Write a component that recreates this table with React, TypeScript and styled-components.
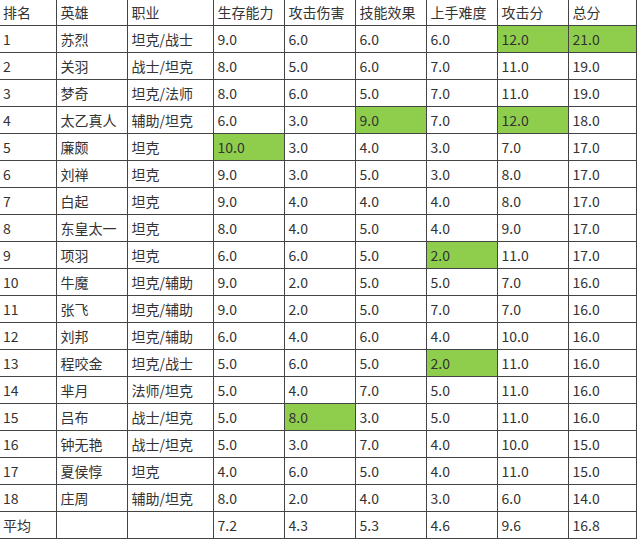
import styled, { createGlobalStyle } from "styled-components";

const GlobalStyle = createGlobalStyle`
    html, body {
        margin: 0;
        padding: 0;
        background: #ffffff;
    }
`;

const Sheet = styled.table`
    width: 636px;
    table-layout: fixed;
    border-collapse: collapse;
    font-family: "Noto Sans CJK SC", "Microsoft YaHei", sans-serif;
    font-size: 14px;
    color: #333333;
`;

const HeadRow = styled.tr`
    height: 25px;
`;

const BodyRow = styled.tr`
    height: 27px;
`;

const Cell = styled.td<{ $hl?: boolean }>`
    padding: 0 0 0 4px;
    border: 1px solid #444444;
    background: ${(p) => (p.$hl ? "#8fce4c" : "#ffffff")};
    white-space: nowrap;
    overflow: hidden;
    line-height: 1;
    vertical-align: middle;

    &:first-child {
        border-left: none;
        padding-left: 3px;
    }
`;

const HeadCell = styled(Cell).attrs({ as: "th" })`
    font-weight: normal;
    text-align: left;
    border-top: none;
`;

const widths = [56, 71, 86, 71, 71, 71, 71, 71, 68];

const headers = ["排名", "英雄", "职业", "生存能力", "攻击伤害", "技能效果", "上手难度", "攻击分", "总分"];

type Row = { cells: string[]; hl?: number[] };

const rows: Row[] = [
    { cells: ["1", "苏烈", "坦克/战士", "9.0", "6.0", "6.0", "6.0", "12.0", "21.0"], hl: [7, 8] },
    { cells: ["2", "关羽", "战士/坦克", "8.0", "5.0", "6.0", "7.0", "11.0", "19.0"] },
    { cells: ["3", "梦奇", "坦克/法师", "8.0", "6.0", "5.0", "7.0", "11.0", "19.0"] },
    { cells: ["4", "太乙真人", "辅助/坦克", "6.0", "3.0", "9.0", "7.0", "12.0", "18.0"], hl: [5, 7] },
    { cells: ["5", "廉颇", "坦克", "10.0", "3.0", "4.0", "3.0", "7.0", "17.0"], hl: [3] },
    { cells: ["6", "刘禅", "坦克", "9.0", "3.0", "5.0", "3.0", "8.0", "17.0"] },
    { cells: ["7", "白起", "坦克", "9.0", "4.0", "4.0", "4.0", "8.0", "17.0"] },
    { cells: ["8", "东皇太一", "坦克", "8.0", "4.0", "5.0", "4.0", "9.0", "17.0"] },
    { cells: ["9", "项羽", "坦克", "6.0", "6.0", "5.0", "2.0", "11.0", "17.0"], hl: [6] },
    { cells: ["10", "牛魔", "坦克/辅助", "9.0", "2.0", "5.0", "5.0", "7.0", "16.0"] },
    { cells: ["11", "张飞", "坦克/辅助", "9.0", "2.0", "5.0", "7.0", "7.0", "16.0"] },
    { cells: ["12", "刘邦", "坦克/辅助", "6.0", "4.0", "6.0", "4.0", "10.0", "16.0"] },
    { cells: ["13", "程咬金", "坦克/战士", "5.0", "6.0", "5.0", "2.0", "11.0", "16.0"], hl: [6] },
    { cells: ["14", "芈月", "法师/坦克", "5.0", "4.0", "7.0", "5.0", "11.0", "16.0"] },
    { cells: ["15", "吕布", "战士/坦克", "5.0", "8.0", "3.0", "5.0", "11.0", "16.0"], hl: [4] },
    { cells: ["16", "钟无艳", "战士/坦克", "5.0", "3.0", "7.0", "4.0", "10.0", "15.0"] },
    { cells: ["17", "夏侯惇", "坦克", "4.0", "6.0", "5.0", "4.0", "11.0", "15.0"] },
    { cells: ["18", "庄周", "辅助/坦克", "8.0", "2.0", "4.0", "3.0", "6.0", "14.0"] },
    { cells: ["平均", "", "", "7.2", "4.3", "5.3", "4.6", "9.6", "16.8"] },
];

export default function App() {
    return (
        <>
            <GlobalStyle />
            <Sheet>
                <colgroup>
                    {widths.map((w, i) => (
                        <col key={i} style={{ width: w }} />
                    ))}
                </colgroup>
                <thead>
                    <HeadRow>
                        {headers.map((h) => (
                            <HeadCell key={h}>{h}</HeadCell>
                        ))}
                    </HeadRow>
                </thead>
                <tbody>
                    {rows.map((r, ri) => (
                        <BodyRow key={ri}>
                            {r.cells.map((c, ci) => (
                                <Cell key={ci} $hl={r.hl?.includes(ci)}>
                                    {c}
                                </Cell>
                            ))}
                        </BodyRow>
                    ))}
                </tbody>
            </Sheet>
        </>
    );
}
